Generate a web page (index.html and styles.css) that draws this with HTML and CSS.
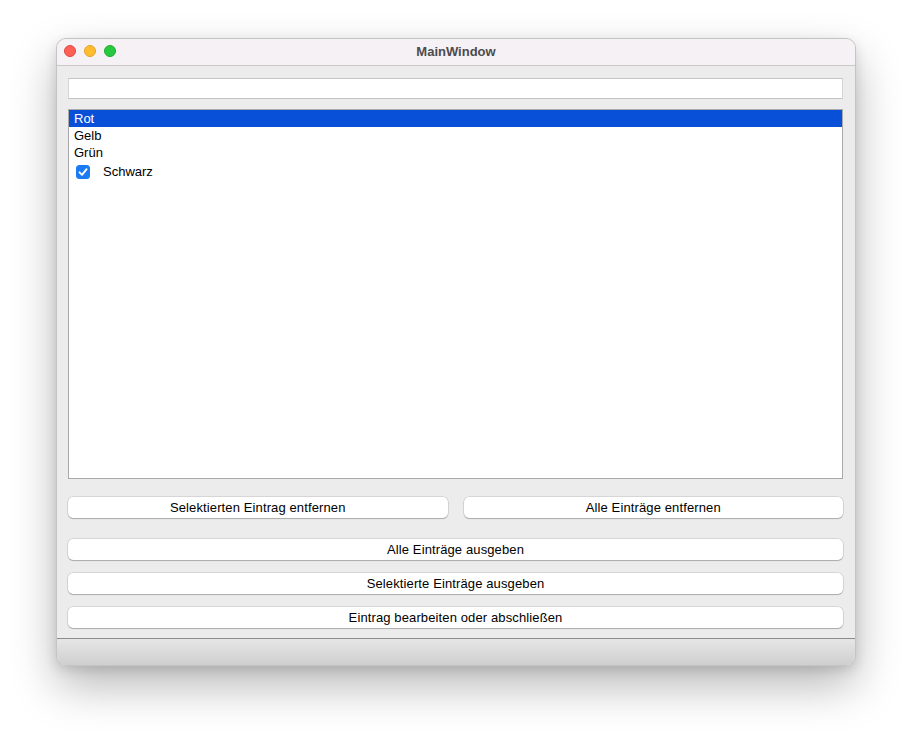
FILE: index.html
```
<!DOCTYPE html>
<html>
<head>
<meta charset="utf-8">
<link rel="stylesheet" href="styles.css">
</head>
<body>
<div class="window">
  <div class="titlebar">
    <div class="lights">
      <span class="light red"></span>
      <span class="light yellow"></span>
      <span class="light green"></span>
    </div>
    <div class="title">MainWindow</div>
  </div>
  <div class="content">
    <div class="lineedit"></div>
    <div class="list">
      <div class="item selected">Rot</div>
      <div class="item">Gelb</div>
      <div class="item">Grün</div>
      <div class="item check-item">
        <span class="checkbox">
          <svg width="14" height="14" viewBox="0 0 14 14"><path d="M3.5 7.3 L6 9.8 L10.6 4.2" fill="none" stroke="#fff" stroke-width="1.9" stroke-linecap="round" stroke-linejoin="round"/></svg>
        </span>
        <span>Schwarz</span>
      </div>
    </div>
    <div class="row first">
      <button class="btn">Selektierten Eintrag entfernen</button>
      <button class="btn">Alle Einträge entfernen</button>
    </div>
    <button class="btn full r2">Alle Einträge ausgeben</button>
    <button class="btn full r3">Selektierte Einträge ausgeben</button>
    <button class="btn full r3">Eintrag bearbeiten oder abschließen</button>
  </div>
  <div class="statusbar"></div>
</div>
</body>
</html>
```

FILE: styles.css
```
html, body {
  margin: 0;
  padding: 0;
  background: #ffffff;
  font-family: "Liberation Sans", Arial, sans-serif;
}
body {
  width: 912px;
  height: 740px;
  overflow: hidden;
}
.window {
  margin: 38px 0 0 56px;
  width: 798px;
  height: 626px;
  border: 1px solid #c4c4c4;
  border-radius: 10px;
  overflow: hidden;
  box-shadow: 0 20px 45px rgba(0,0,0,0.28), 0 4px 12px rgba(0,0,0,0.12);
  display: flex;
  flex-direction: column;
  background: #ececec;
}
.titlebar {
  height: 27px;
  flex: none;
  box-sizing: border-box;
  padding-bottom: 2px;
  background: #f6f1f4;
  border-bottom: 1px solid #c9c7c9;
  display: flex;
  align-items: center;
  position: relative;
}
.lights {
  display: flex;
  gap: 8px;
  padding-left: 7px;
}
.light {
  box-sizing: border-box;
  width: 12px;
  height: 12px;
  border-radius: 50%;
  display: block;
}
.red { background: #fe5f57; border: 0.5px solid #e2463f; }
.yellow { background: #febc2e; border: 0.5px solid #e1a325; }
.green { background: #28c840; border: 0.5px solid #1dad2b; }
.title {
  position: absolute;
  left: 0;
  right: 0;
  top: 0;
  line-height: 25px;
  text-align: center;
  font-size: 13px;
  font-weight: bold;
  color: #4d4b4d;
}
.content {
  flex: 1;
  padding: 12px 12px 0 11px;
  display: flex;
  flex-direction: column;
}
.lineedit {
  height: 19px;
  background: #fff;
  border: 1px solid #d4d4d4;
  border-top-color: #c4c4c4;
  border-bottom-color: #c4c4c4;
}
.list {
  margin-top: 10px;
  height: 368px;
  background: #fff;
  border: 1px solid #a9a9a9;
  font-size: 13px;
  color: #000;
}
.item {
  height: 17px;
  line-height: 17px;
  padding-left: 5px;
}
.item.selected {
  background: #0850d8;
  color: #fff;
}
.check-item {
  height: 20px;
  line-height: 20px;
  display: flex;
  align-items: center;
  padding-left: 7px;
}
.checkbox {
  width: 14px;
  height: 14px;
  border-radius: 3.5px;
  background: #1a7bf4;
  display: flex;
  margin-right: 13px;
  margin-top: 2px;
}
.check-item span:last-child { margin-top: 2px; }
.checkbox svg { display: block; }
.row {
  display: flex;
  gap: 16px;
}
.row .btn { flex: 1; }
.first { margin-top: 18px; }
.btn {
  height: 21px;
  border: none;
  border-radius: 5px;
  background: #fff;
  font-family: "Liberation Sans", Arial, sans-serif;
  font-size: 13px;
  letter-spacing: 0.12px;
  color: #000;
  padding: 0;
  box-shadow: 0 0 0 0.5px rgba(0,0,0,0.18), 0 1px 1px rgba(0,0,0,0.2);
  text-align: center;
  line-height: 21px;
}
.full { display: block; width: 100%; }
.r2 { margin-top: 21px; }
.r3 { margin-top: 13px; }
.statusbar {
  flex: none;
  height: 26px;
  border-top: 1px solid #8c8c8c;
  background: linear-gradient(#e6e6e6, #cfcfcf);
}
```
